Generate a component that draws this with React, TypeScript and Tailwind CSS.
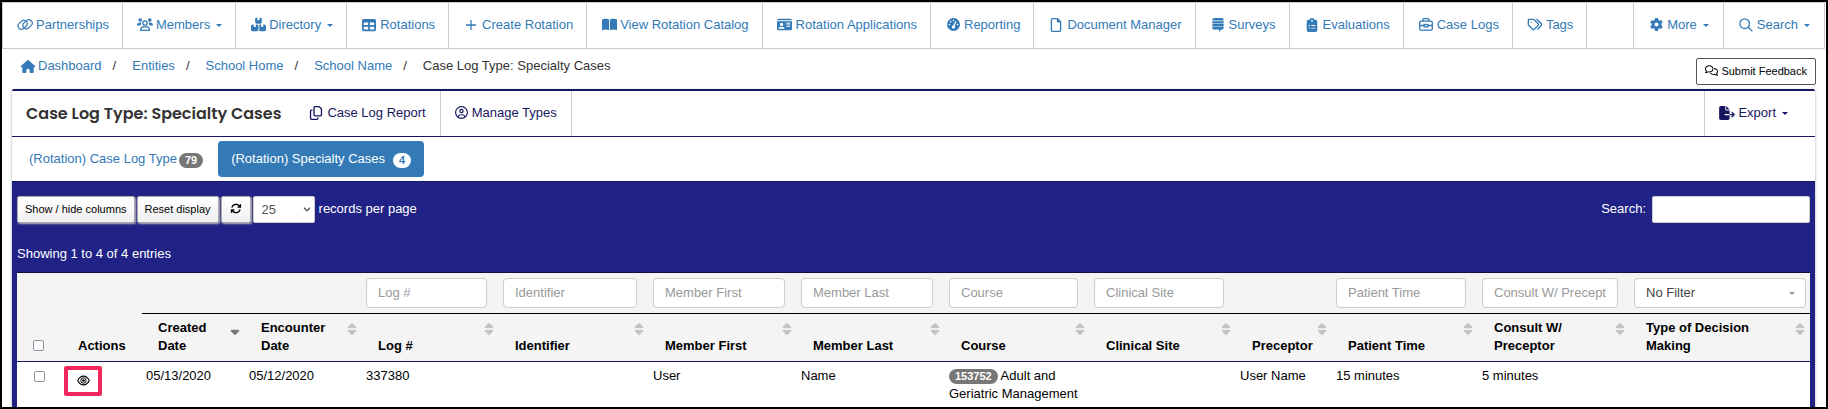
import type { ReactNode } from "react";
import {
  FaArrowsRotate,
  FaBookOpen,
  FaBoxesStacked,
  FaClipboardList,
  FaFileExport,
  FaGaugeHigh,
  FaGear,
  FaHouse,
  FaIdCard,
  FaRegCircleUser,
  FaRegComments,
  FaRegCopy,
  FaRegFile,
  FaSort,
  FaSortDown,
  FaStackExchange,
  FaTable,
} from "react-icons/fa6";

function LinkIcon() {
  return (
    <svg viewBox="0 0 16 13" className="w-4 h-[13px]" fill="none" stroke="currentColor" strokeWidth="1.2">
      <rect x="0.6" y="3.4" width="10" height="6.8" rx="3.4" transform="rotate(-42 5.6 6.8)" />
      <rect x="5.6" y="2.8" width="10" height="6.8" rx="3.4" transform="rotate(-42 10.6 6.2)" />
    </svg>
  );
}

function MembersIcon() {
  return (
    <svg viewBox="0 0 16 13" className="w-4 h-[13px]" fill="currentColor">
      <circle cx="3.2" cy="2" r="1.8" />
      <circle cx="12.8" cy="2" r="1.8" />
      <path d="M0 7.4C0 5.6 1.2 4.6 2.8 4.6h1.4L3.6 7.4zM16 7.4c0-1.8-1.2-2.8-2.8-2.8h-1.4l.6 2.8z" />
      <circle cx="8" cy="5" r="2.2" fill="none" stroke="currentColor" strokeWidth="1.3" />
      <path d="M3.7 12.3c0-2.2 1-3.5 2.6-3.5h3.4c1.6 0 2.6 1.3 2.6 3.5z" fill="none" stroke="currentColor" strokeWidth="1.3" />
    </svg>
  );
}

function PlusIcon() {
  return (
    <svg viewBox="0 0 12 12" className="size-3" fill="none" stroke="currentColor" strokeWidth="1.3">
      <path d="M6 1v10M1 6h10" />
    </svg>
  );
}

function BriefcaseIcon() {
  return (
    <svg viewBox="0 0 14 13" className="w-3.5 h-[13px]" fill="none" stroke="currentColor" strokeWidth="1.3">
      <rect x="0.7" y="3.2" width="12.6" height="9" rx="1.4" />
      <path d="M4 3.2V1.6C4 1 4.4.7 5 .7h4c.6 0 1 .3 1 .9v1.6M.7 7.5h4.3M9 7.5h4.3" />
      <rect x="5.2" y="6.5" width="3.6" height="2.4" />
    </svg>
  );
}

function TagsIcon() {
  return (
    <svg viewBox="0 0 16 13" className="w-4 h-[13px]" fill="none" stroke="currentColor" strokeWidth="1.3" strokeLinejoin="round">
      <path d="M1.4 1.4h4.8c.4 0 .7.1 1 .4l3.9 3.9c.5.5.5 1.2 0 1.7l-3.8 3.8c-.5.5-1.2.5-1.7 0L1.7 7.3c-.3-.3-.4-.6-.4-1z" />
      <path d="M9.6 1l4.6 4.5c.6.6.6 1.5 0 2.1L10.4 11.5" />
      <circle cx="4.2" cy="4.1" r=".7" fill="currentColor" stroke="none" />
    </svg>
  );
}

function SearchIcon() {
  return (
    <svg viewBox="0 0 14 14" className="size-3.5" fill="none" stroke="currentColor" strokeWidth="1.3">
      <circle cx="5.7" cy="5.7" r="4.8" />
      <path d="M9.2 9.2l4.2 4.2" />
    </svg>
  );
}

function EyeIcon() {
  return (
    <svg viewBox="0 0 13 11" className="w-[13px] h-[11px]" fill="none" stroke="currentColor">
      <path d="M.7 5.5C2 2.8 4 1.1 6.5 1.1s4.5 1.7 5.8 4.4C11 8.2 9 9.9 6.5 9.9S2 8.2.7 5.5z" strokeWidth="1.1" />
      <circle cx="6.5" cy="5.5" r="2.7" strokeWidth="1" />
      <circle cx="6.5" cy="5.5" r="1.3" fill="currentColor" stroke="none" />
    </svg>
  );
}

function Caret() {
  return (
    <svg viewBox="0 0 6 3" className="w-1.5 h-[3px] ml-1.5 mt-0.5" fill="currentColor">
      <path d="M0 0h6L3 3z" />
    </svg>
  );
}

type NavEntry = { label: string; icon: ReactNode; menu?: boolean };

const mainNav: NavEntry[] = [
  { label: "Partnerships", icon: <LinkIcon /> },
  { label: "Members", icon: <MembersIcon />, menu: true },
  { label: "Directory", icon: <FaBoxesStacked size={15} />, menu: true },
  { label: "Rotations", icon: <FaTable size={14} /> },
  { label: "Create Rotation", icon: <PlusIcon /> },
  { label: "View Rotation Catalog", icon: <FaBookOpen size={15} /> },
  { label: "Rotation Applications", icon: <FaIdCard size={15} /> },
  { label: "Reporting", icon: <FaGaugeHigh size={13} /> },
  { label: "Document Manager", icon: <FaRegFile size={14} /> },
  { label: "Surveys", icon: <FaStackExchange size={14} /> },
  { label: "Evaluations", icon: <FaClipboardList size={14} /> },
  { label: "Case Logs", icon: <BriefcaseIcon /> },
  { label: "Tags", icon: <TagsIcon /> },
];

const sideNav: NavEntry[] = [
  { label: "More", icon: <FaGear size={13} />, menu: true },
  { label: "Search", icon: <SearchIcon />, menu: true },
];

function NavContent({ entry }: { entry: NavEntry }) {
  return (
    <>
      <span className="mr-[3px] flex w-4 justify-center">{entry.icon}</span>
      {entry.label}
      {entry.menu && <Caret />}
    </>
  );
}

function NavItem({ entry, side }: { entry: NavEntry; side?: boolean }) {
  const box = side
    ? "flex h-[45px] items-center border-l border-[#ccc] pb-0.5 px-[14px] whitespace-nowrap"
    : "flex h-[45px] items-center border-r border-[#ccc] pb-0.5 pl-[14px] pr-[13px] whitespace-nowrap";
  return entry.menu ? (
    <button type="button" className={box}>
      <NavContent entry={entry} />
    </button>
  ) : (
    <a href="#" className={box}>
      <NavContent entry={entry} />
    </a>
  );
}

const crumbs = ["Dashboard", "Entities", "School Home", "School Name"];

type Column = {
  title: string;
  width: string;
  filter?: "text" | "select";
  active?: boolean;
};

const columns: Column[] = [
  { title: "Created Date", width: "w-[103px]", active: true },
  { title: "Encounter Date", width: "w-[117px]" },
  { title: "Log #", width: "w-[137px]", filter: "text" },
  { title: "Identifier", width: "w-[150px]", filter: "text" },
  { title: "Member First", width: "w-[148px]", filter: "text" },
  { title: "Member Last", width: "w-[148px]", filter: "text" },
  { title: "Course", width: "w-[145px]", filter: "text" },
  { title: "Clinical Site", width: "w-[146px]", filter: "text" },
  { title: "Preceptor", width: "w-[96px]" },
  { title: "Patient Time", width: "w-[146px]", filter: "text" },
  { title: "Consult W/ Preceptor", width: "w-[152px]", filter: "text" },
  { title: "Type of Decision Making", width: "w-[180px]", filter: "select" },
];

const row: ReactNode[] = [
  "05/13/2020",
  "05/12/2020",
  "337380",
  "",
  "User",
  "Name",
  <>
    <Badge tone="gray">153752</Badge> Adult and Geriatric Management
  </>,
  "",
  "User Name",
  "15 minutes",
  "5 minutes",
  "",
];

function Badge({ tone, children }: { tone: "gray" | "white"; children: ReactNode }) {
  return (
    <span
      className={
        tone === "gray"
          ? "mt-0.5 inline-block rounded-full bg-[#777] px-1.5 align-top text-[11px] leading-[15px] font-bold text-white"
          : "mt-0.5 inline-block rounded-full bg-white px-1.5 align-top text-[11px] leading-[15px] font-bold text-[#337ab7]"
      }
    >
      {children}
    </span>
  );
}

const toolButton =
  "flex h-[27px] items-center rounded-xs border border-[#aaa] bg-linear-to-b from-white to-[#f0f0f0] px-[7px] pb-0.5 text-[11px] text-black shadow-[1px_1px_2px_#bbb]";

const checkbox =
  "block size-[11px] appearance-none rounded-xs border border-[#8f8f9d] bg-white checked:bg-[#337ab7]";

export default function App() {
  return (
    <div className="flex min-h-screen flex-col border-2 border-black bg-white font-['Liberation_Sans',Arial,sans-serif] text-[13px] leading-[18px] text-[#333]">
      <nav className="mr-px flex border border-[#ccc] text-[#337ab7]">
        {mainNav.map((entry) => (
          <NavItem key={entry.label} entry={entry} />
        ))}
        <div className="ml-auto flex">
          {sideNav.map((entry) => (
            <NavItem key={entry.label} entry={entry} side />
          ))}
        </div>
      </nav>

      <div className="flex h-10 items-start justify-between pr-2.5 pl-[18px]">
        <ol className="flex pt-2">
          {crumbs.map((crumb, i) => (
            <li key={crumb} className="flex">
              <a href="#" className="flex items-center text-[#337ab7]">
                {i === 0 && <FaHouse size={13} className="mr-0.5 w-4" />}
                {crumb}
              </a>
              <span className="mr-4 ml-[11px]">/</span>
            </li>
          ))}
          <li>Case Log Type: Specialty Cases</li>
        </ol>
        <button
          type="button"
          className="mt-[9px] flex h-[27px] items-center gap-[3px] rounded-xs border border-[#555] px-2 pb-0.5 text-[11px] text-black"
        >
          <FaRegComments size={13} />
          Submit Feedback
        </button>
      </div>

      <main className="mr-[11px] ml-[10px] flex flex-1 flex-col rounded-t-xs border-t-2 border-[#171660] shadow-[0_1px_3px_rgba(0,0,0,0.35)]">
        <header className="flex h-[46px] border-b border-[#171660] text-[#171660]">
          <h1 className="mr-[14px] self-center pl-3.5 font-[Poppins,Inter,sans-serif] text-[16px] font-semibold whitespace-nowrap text-[#333]">
            Case Log Type: Specialty Cases
          </h1>
          <a href="#" className="flex items-center gap-1 border-r border-[#ccc] px-[14px] pb-0.5">
            <FaRegCopy size={14} />
            Case Log Report
          </a>
          <a href="#" className="flex items-center gap-1 border-r border-[#ccc] px-[14px] pb-0.5">
            <FaRegCircleUser size={13} />
            Manage Types
          </a>
          <button
            type="button"
            className="ml-auto flex items-center border-l border-[#ccc] pr-[27px] pb-0.5 pl-[14px]"
          >
            <FaFileExport size={14} className="mr-[3px] w-4" />
            Export
            <Caret />
          </button>
        </header>

        <div className="flex h-11 items-center gap-[3px] px-[5px]">
          <a href="#" className="flex h-9 items-center gap-0.5 rounded px-3 text-[#337ab7]">
            (Rotation) Case Log Type <Badge tone="gray">79</Badge>
          </a>
          <a href="#" className="flex h-9 items-center gap-2 rounded bg-[#337ab7] px-[13px] text-white">
            (Rotation) Specialty Cases <Badge tone="white">4</Badge>
          </a>
        </div>

        <section className="flex flex-1 flex-col border-t border-[#171660] bg-[#202286] px-[5px] pt-3.5 text-white">
          <div className="flex items-center gap-0.5">
            <button type="button" className={toolButton}>
              Show / hide columns
            </button>
            <button type="button" className={toolButton}>
              Reset display
            </button>
            <button type="button" aria-label="Refresh" className={toolButton}>
              <FaArrowsRotate size={11} className="w-3.5" />
            </button>
            <label className="flex items-center gap-1">
              <span className="relative flex items-center">
                <select className="h-[27px] w-[62px] appearance-none rounded-xs border border-[#ccc] bg-white pl-2 text-[#555]">
                  <option>25</option>
                </select>
                <svg
                  viewBox="0 0 8 5"
                  className="pointer-events-none absolute right-1 h-[5px] w-2"
                  fill="none"
                  stroke="#555"
                  strokeWidth="1.3"
                >
                  <path d="M1 .8l3 3 3-3" />
                </svg>
              </span>
              <span className="pb-0.5">records per page</span>
            </label>
            <label className="ml-auto flex items-center gap-1.5">
              <span className="pb-0.5">Search:</span>
              <input type="text" className="h-[27px] w-[158px] rounded-xs border border-[#ccc] bg-white px-2 text-[#333]" />
            </label>
          </div>

          <p className="mt-[22px] mb-[9px]">Showing 1 to 4 of 4 entries</p>

          <div className="flex-1 border-t border-[#0f0f40] bg-white">
            <table className="w-full table-fixed border-collapse text-left text-black">
              <colgroup>
                <col className="w-[43px]" />
                <col className="w-[82px]" />
                {columns.map((c) => (
                  <col key={c.title} className={c.width} />
                ))}
              </colgroup>
              <thead className="bg-[#f4f4f4]">
                <tr>
                  <th rowSpan={2} className="border-b border-[#171660] pb-[10px] pl-4 align-bottom">
                    <input type="checkbox" aria-label="Select all" className={checkbox} />
                  </th>
                  <th rowSpan={2} className="border-b border-[#171660] pb-1.5 pl-[18px] align-bottom">
                    Actions
                  </th>
                  {columns.map((c) => (
                    <td
                      key={c.title}
                      className="h-10 border-b border-black pr-3 pl-1 last:pr-1"
                    >
                      {c.filter === "text" && (
                        <input
                          type="text"
                          aria-label={"Filter by " + c.title}
                          placeholder={c.title}
                          className="block h-[30px] w-full rounded border border-[#ccc] bg-white px-[11px] placeholder:text-[#999]"
                        />
                      )}
                      {c.filter === "select" && (
                        <span className="relative flex items-center text-[#999]">
                          <select
                            aria-label={"Filter by " + c.title}
                            className="block h-[30px] w-full appearance-none rounded border border-[#ccc] bg-white px-[11px] text-[#444]"
                          >
                            <option>No Filter</option>
                          </select>
                          <span className="pointer-events-none absolute right-[11px] flex">
                            <Caret />
                          </span>
                        </span>
                      )}
                    </td>
                  ))}
                </tr>
                <tr>
                  {columns.map((c) => (
                    <th
                      key={c.title}
                      className="relative h-12 border-b border-[#171660] pr-5 pb-1.5 pl-4 align-bottom"
                    >
                      {c.title}
                      {c.active ? (
                        <FaSortDown size={14} className="absolute top-2 right-[3px] text-[#777]" />
                      ) : (
                        <FaSort size={14} className="absolute top-2 right-[3px] text-[#c4c4c4]" />
                      )}
                    </th>
                  ))}
                </tr>
              </thead>
              <tbody>
                <tr className="align-top">
                  <td className="pt-[9px] pl-[17px]">
                    <input type="checkbox" aria-label="Select row" className={checkbox} />
                  </td>
                  <td className="pt-1 pl-1">
                    <button
                      type="button"
                      aria-label="View"
                      className="flex h-[30px] w-[38px] items-center justify-center rounded-xs border-4 border-[#f2275e] bg-white"
                    >
                      <EyeIcon />
                    </button>
                  </td>
                  {row.map((cell, i) => (
                    <td key={columns[i].title} className="pt-[5px] pr-1 pl-1">
                      {cell}
                    </td>
                  ))}
                </tr>
              </tbody>
            </table>
          </div>
        </section>
      </main>
    </div>
  );
}
